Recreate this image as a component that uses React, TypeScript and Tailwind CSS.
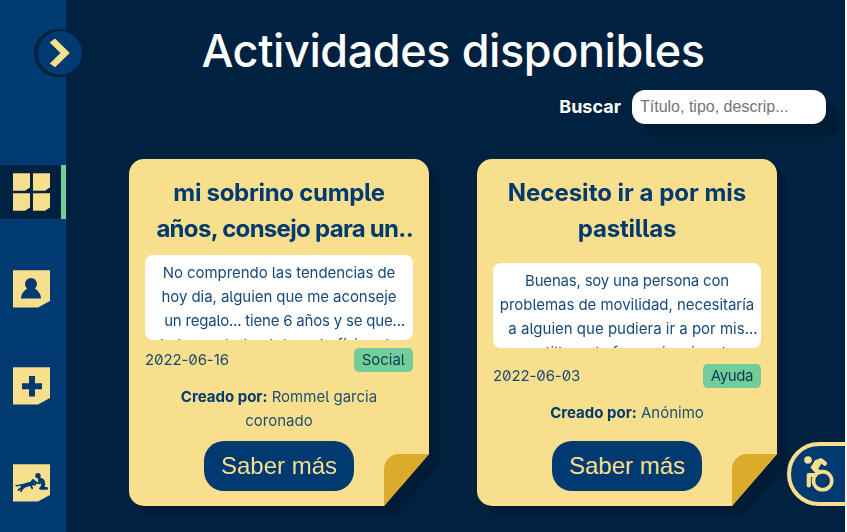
import type { ReactNode } from "react";

const hyper = "font-['Inter','Noto_Sans',sans-serif] [font-feature-settings:'cv05','zero']";

function Note({ children }: { children?: ReactNode }) {
  return (
    <svg className="block h-[38px] w-[37px]" viewBox="0 0 37 38">
      <path d="M0 0.3H37V31L25 37.6H0Z" fill="#f8df8d" />
      <g fill="#003a70">{children}</g>
    </svg>
  );
}

function Sidebar() {
  return (
    <nav className="relative h-full w-[66px] shrink-0 bg-[#003a70] pt-[165px]">
      <button className="absolute top-[29px] left-[34px] size-12 rounded-full bg-[#00213f]">
        <span className="absolute top-[2px] left-[4px] block size-11 rounded-full bg-[#003a70]" />
        <svg className="absolute top-[9px] left-[15px] h-[30px] w-[22px]" viewBox="0 0 22 30">
          <path d="M6 0.5L20.8 15L6 29.3L0.8 25.5L11.5 15L0.8 4.5Z" fill="#f8df8d" />
        </svg>
      </button>
      <div className="h-[54px] border-r-[5px] border-[#73cd9a] bg-[#00213f] pt-2 pl-[13px]">
        <svg className="block h-[38px] w-[37px]" viewBox="0 0 37 38" fill="#f8df8d">
          <path d="M0 0.3H17V14.5L12 17.7H0Z" />
          <path d="M20 0.3H37V14.5L32 17.7H20Z" />
          <path d="M0 20.3H17V34.5L12 37.7H0Z" />
          <path d="M20 20.3H37V34.5L32 37.7H20Z" />
        </svg>
      </div>
      <div className="mt-[51px] ml-[13px]">
        <Note>
          <circle cx="18" cy="14" r="6" />
          <path d="M8 28.5C8 22 13 20 14 18.5H22C23 20 28 22 28 28.5Z" />
        </Note>
      </div>
      <div className="mt-[59px] ml-[13px]">
        <Note>
          <path d="M16 9H22V16.3H29V22.3H22V29.5H16V22.3H9V16.3H16Z" />
        </Note>
      </div>
      <div className="mt-[59px] ml-[13px]">
        <Note>
          <circle cx="25" cy="11.7" r="2.7" />
          <g fill="none" stroke="#003a70" strokeLinecap="round" strokeLinejoin="round">
            <path d="M26.8 15.8C29.5 15.5 31 19 29.8 22" strokeWidth="4" />
            <path d="M29.8 22L27.6 24.4H33.6" strokeWidth="2.8" />
            <path d="M26.3 16L27 19.3L22.5 18.3" strokeWidth="1.8" />
            <path d="M3 21.3C5 23 6.5 19.8 9.5 21" strokeWidth="1.3" />
            <path d="M10 22L19.5 19.2" strokeWidth="4" />
            <path d="M19 18L20 16.2L23 18.8" strokeWidth="2.4" />
            <path d="M9 22.3L7.8 24.3L5.5 26M11 23L9 25L8 27.2" strokeWidth="1.8" />
            <path d="M17.5 21L19.3 24.2M20 20.5L22.3 20.7" strokeWidth="1.8" />
          </g>
        </Note>
      </div>
    </nav>
  );
}

interface CardProps {
  title: ReactNode;
  body: ReactNode;
  date: string;
  tag: ReactNode;
  author: ReactNode;
  tall?: boolean;
}

function Card({ title, body, date, tag, author, tall }: CardProps) {
  return (
    <article className="w-[300px] drop-shadow-[10px_10px_0_#001b35]">
      <div className="relative flex h-[347px] flex-col items-center overflow-hidden rounded-[15px] bg-[#f8df8d] px-4 pt-4 text-[#003a70] [clip-path:polygon(0_0,100%_0,100%_295px,255px_100%,0_100%)]">
        <h2 className="h-[72px] w-full overflow-hidden text-center text-[24px] leading-9 font-bold whitespace-nowrap">{title}</h2>
        <div className={`${tall ? "mt-4" : "mt-2"} h-[85px] w-full shrink-0 overflow-hidden rounded-[8px] bg-white pt-1.5 text-center text-[15px] leading-6 whitespace-nowrap text-[#174a7b]`}>
          {body}
        </div>
        <div className={`${tall ? "mt-4" : "mt-2"} flex h-6 w-full shrink-0 items-center justify-between text-[15px] leading-6`}>
          <span className="tracking-[-0.1px] text-[#174a6f]">{date}</span>
          <span className="rounded-[5px] bg-[#73cd9a] px-2 text-[#0d4054]">{tag}</span>
        </div>
        <p className="mt-[13px] text-center text-[15px] leading-6 whitespace-nowrap text-[#1f4f73]">{author}</p>
        <button className="absolute top-[282px] left-[75px] h-[50px] w-[150px] rounded-[20px] bg-[#003a70] font-['Liberation_Sans',sans-serif] text-[24px] text-[#f8df8d]">
          Saber más
        </button>
        <span className="absolute top-[295px] left-[255px] h-[52px] w-[45px] rounded-tl-[15px] bg-[#ddab2b]" />
      </div>
    </article>
  );
}

export default function App() {
  return (
    <div className={`${hyper} h-[532px] w-[847px] overflow-hidden bg-[#f4f4f4]`}>
      <div className="relative flex h-full w-[845px] overflow-hidden bg-[#00213f]">
        <Sidebar />
        <main className="flex-1">
          <h1 className="mt-[21px] h-[60px] pr-[5px] text-center text-[45px] leading-[60px] font-[450] tracking-[-0.42px] whitespace-nowrap text-white">Actividades disponibles</h1>
          <label className="mt-[9px] mr-[19px] flex items-center justify-end gap-[11px]">
            <span className="relative -top-px text-[18px] font-bold text-white">Buscar</span>
            <input
              className="h-[34px] w-[194px] rounded-[13px] bg-white px-2 font-['Liberation_Sans',sans-serif] text-[16px] shadow-[13px_13px_0_#001b35] placeholder:text-[#757575]"
              placeholder="Título, tipo, descrip..."
            />
          </label>
          <div className="mt-[35px] ml-[63px] flex gap-12">
            <Card
              title={
                <>
                  <span className="block tracking-[-0.3px]">mi sobrino cumple</span>
                  <span className="block text-right tracking-[-0.7px]">años, consejo para un..</span>
                </>
              }
              body={
                <>
                  <span className="block tracking-[-0.06px]">No comprendo las tendencias de</span>
                  <span className="block tracking-[-0.06px]">hoy dia, alguien que me aconseje</span>
                  <span className="block pl-[11px] tracking-[-0.2px]">un regalo... tiene 6 años y se que...</span>
                  <span className="block">le ha gustado el deporte físico de</span>
                </>
              }
              date="2022-06-16"
              tag="Social"
              author={<><b className="text-[#003a70]">Creado por:</b> Rommel garcia<br />coronado</>}
            />
            <Card
              tall
              title={
                <>
                  <span className="block">Necesito ir a por mis</span>
                  <span className="block tracking-[-0.2px]">pastillas</span>
                </>
              }
              body={
                <>
                  <span className="block tracking-[-0.2px]">Buenas, soy una persona con</span>
                  <span className="block tracking-[-0.05px]">problemas de movilidad, necesitaría</span>
                  <span className="block pl-3">a alguien que pudiera ir a por mis...</span>
                  <span className="block">pastillas a la farmacia, vivo de</span>
                </>
              }
              date="2022-06-03"
              tag={<span className="tracking-[-0.4px]">Ayuda</span>}
              author={<><b className="text-[#003a70]">Creado por:</b> Anónimo</>}
            />
          </div>
        </main>
        <button className="absolute top-[442px] left-[787px] h-[64px] w-[70px] rounded-l-[32px] border-[4px] border-[#f8df8d] bg-[#003a70]">
          <svg className="absolute top-[8px] left-[10px] h-[42px] w-[36px]" viewBox="0 0 36 42" fill="none" stroke="#f8df8d">
            <circle cx="7" cy="6" r="3.8" fill="#f8df8d" stroke="none" />
            <circle cx="21.6" cy="26.7" r="9.1" strokeWidth="3.6" />
            <path d="M15.5 8L20 6.4L23.8 9.5" strokeWidth="4.4" strokeLinejoin="round" strokeLinecap="round" />
            <path d="M10 13.5L14.5 6.5L21 8L16.8 14.5L21.5 19L16 20.5Z" fill="#f8df8d" strokeWidth="1" strokeLinejoin="round" />
            <path d="M14 21H7.8V31.5" strokeWidth="4.2" strokeLinecap="round" strokeLinejoin="round" />
          </svg>
        </button>
      </div>
    </div>
  );
}
